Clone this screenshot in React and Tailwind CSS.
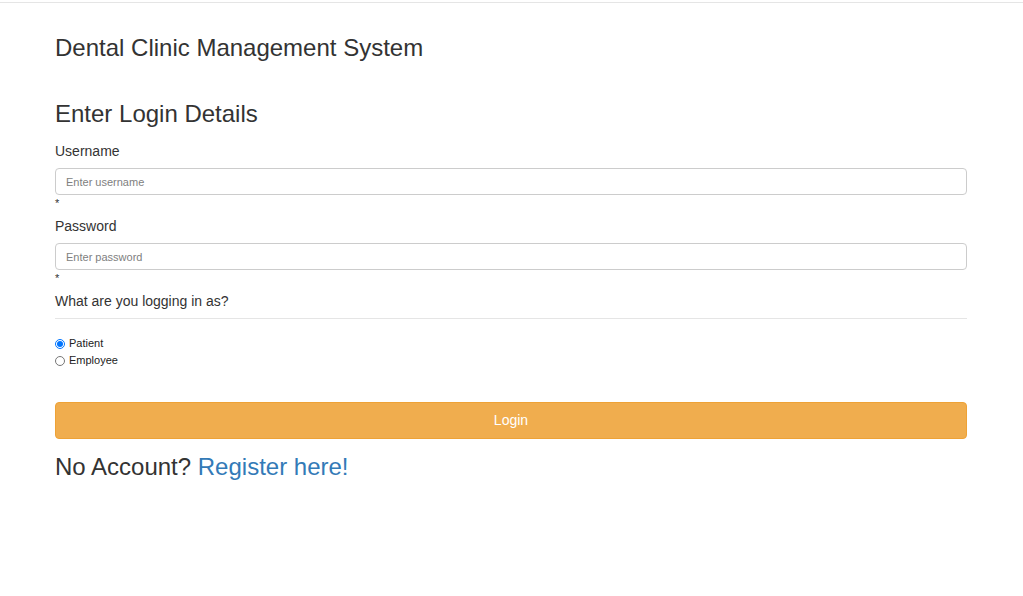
import React, { useState } from 'react';

const font = { fontFamily: '"Liberation Sans", Arial, sans-serif' };

const Field = ({ label, type, placeholder }) => (
  <div>
    <label className="block text-[14px] leading-[20px] text-[#333] mb-[7px]">{label}</label>
    <input
      type={type}
      placeholder={placeholder}
      className="block w-full h-[27px] px-[10px] text-[11px] border border-[#ccc] rounded-[4px] placeholder:text-[#808080] outline-none"
    />
    <div className="text-[11px] leading-[13px] text-[#333] mt-[2px]">*</div>
  </div>
);

const App = () => {
  const [role, setRole] = useState('patient');

  return (
    <div className="min-h-[596px] bg-white" style={font}>
      <div className="pt-[2px]">
        <div className="border-t border-[#e5e5e5]" />
      </div>
      <div className="pl-[55px] pr-[56px] pt-[32px]">
        <h3 className="text-[24px] leading-[26px] text-[#333]">Dental Clinic Management System</h3>
        <h3 className="text-[24px] leading-[26px] text-[#333] mt-[40px]">Enter Login Details</h3>

        <form className="mt-[14px] flex flex-col gap-[6px]" onSubmit={(e) => e.preventDefault()}>
          <Field label="Username" type="text" placeholder="Enter username" />
          <Field label="Password" type="password" placeholder="Enter password" />

          <div className="text-[14px] leading-[20px] text-[#333]">What are you logging in as?</div>
          <hr className="border-t border-[#e5e5e5] mt-[1px]" />

          <div className="mt-[11px] flex flex-col gap-[2px] text-[11px] text-[#222]">
            <label className="flex items-center gap-[4px] leading-[15px]">
              <input
                type="radio"
                name="role"
                checked={role === 'patient'}
                onChange={() => setRole('patient')}
                className="m-0 w-[10px] h-[10px]"
              />
              Patient
            </label>
            <label className="flex items-center gap-[4px] leading-[15px]">
              <input
                type="radio"
                name="role"
                checked={role === 'employee'}
                onChange={() => setRole('employee')}
                className="m-0 w-[10px] h-[10px]"
              />
              Employee
            </label>
          </div>

          <button
            type="submit"
            className="mt-[28px] h-[37px] w-full rounded-[4px] bg-[#f0ad4e] border border-[#eea236] text-white text-[14px]"
          >
            Login
          </button>
        </form>

        <div className="mt-[15px] text-[24px] leading-[26px] text-[#333]">
          No Account? <a href="#" className="text-[#337ab7]">Register here!</a>
        </div>
      </div>
    </div>
  );
};

export default App;
